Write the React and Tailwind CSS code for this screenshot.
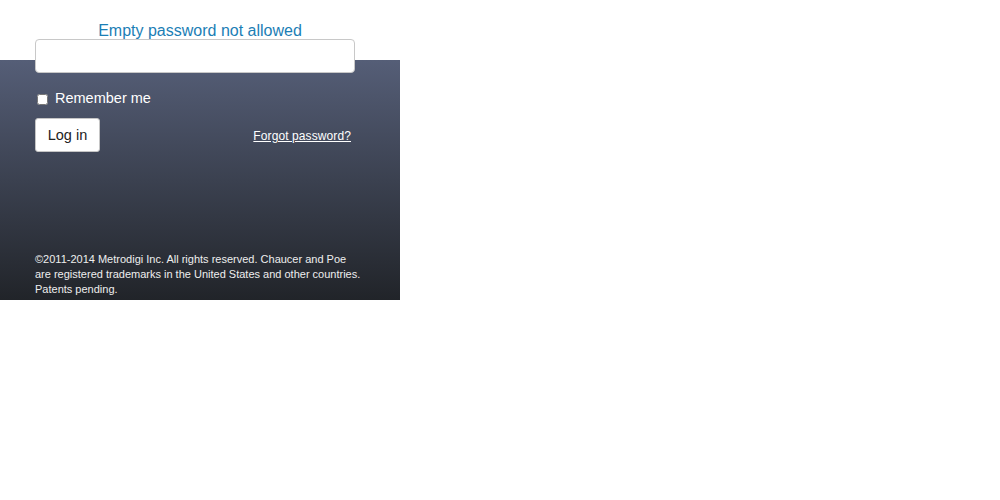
import React, { useState } from 'react';

const App = () => {
  const [remember, setRemember] = useState(false);
  const [password, setPassword] = useState('');

  return (
    <div className="min-h-[500px] bg-white" style={{ fontFamily: '"Liberation Sans", Arial, sans-serif' }}>
      <div className="w-[400px] h-[300px] flex flex-col bg-[linear-gradient(to_bottom,#ffffff_60px,#555e77_60px,#212429_100%)]">
        {/* error message */}
        <div className="pt-[22px] h-[39px] text-center text-[16px] leading-[17px] text-[#1b7eb5]">
          Empty password not allowed
        </div>

        <div className="px-[35px]">
          <input
            type="password"
            value={password}
            onChange={e => setPassword(e.target.value)}
            className="block w-[320px] h-[34px] rounded-[4px] border border-[#c8c8c8] bg-white px-2 text-sm outline-none"
          />

          <label className="mt-[18px] flex items-center h-4 gap-[7px] text-[14.5px] text-white">
            <input
              type="checkbox"
              checked={remember}
              onChange={e => setRemember(e.target.checked)}
              className="ml-[2px] mt-[1px] w-[11px] h-[11px]"
            />
            Remember me
          </label>

          <div className="mt-[11px] flex items-center justify-between w-[316px]">
            <button className="w-[65px] h-[34px] pt-[2px] rounded-[3px] border border-[#c5c5c5] bg-white text-[14.5px] text-[#222]">
              Log in
            </button>
            <a href="#" className="pt-[2px] text-[12px] text-white underline tracking-[0.1px]">
              Forgot password?
            </a>
          </div>
        </div>

        {/* footer */}
        <div className="mt-auto px-[35px] pb-[3px] text-[11px] leading-[15px] text-[#eeeeee]">
          <div>©2011-2014 Metrodigi Inc. All rights reserved. Chaucer and Poe</div>
          <div>are registered trademarks in the United States and other countries.</div>
          <div>Patents pending.</div>
        </div>
      </div>
    </div>
  );
};

export default App;
